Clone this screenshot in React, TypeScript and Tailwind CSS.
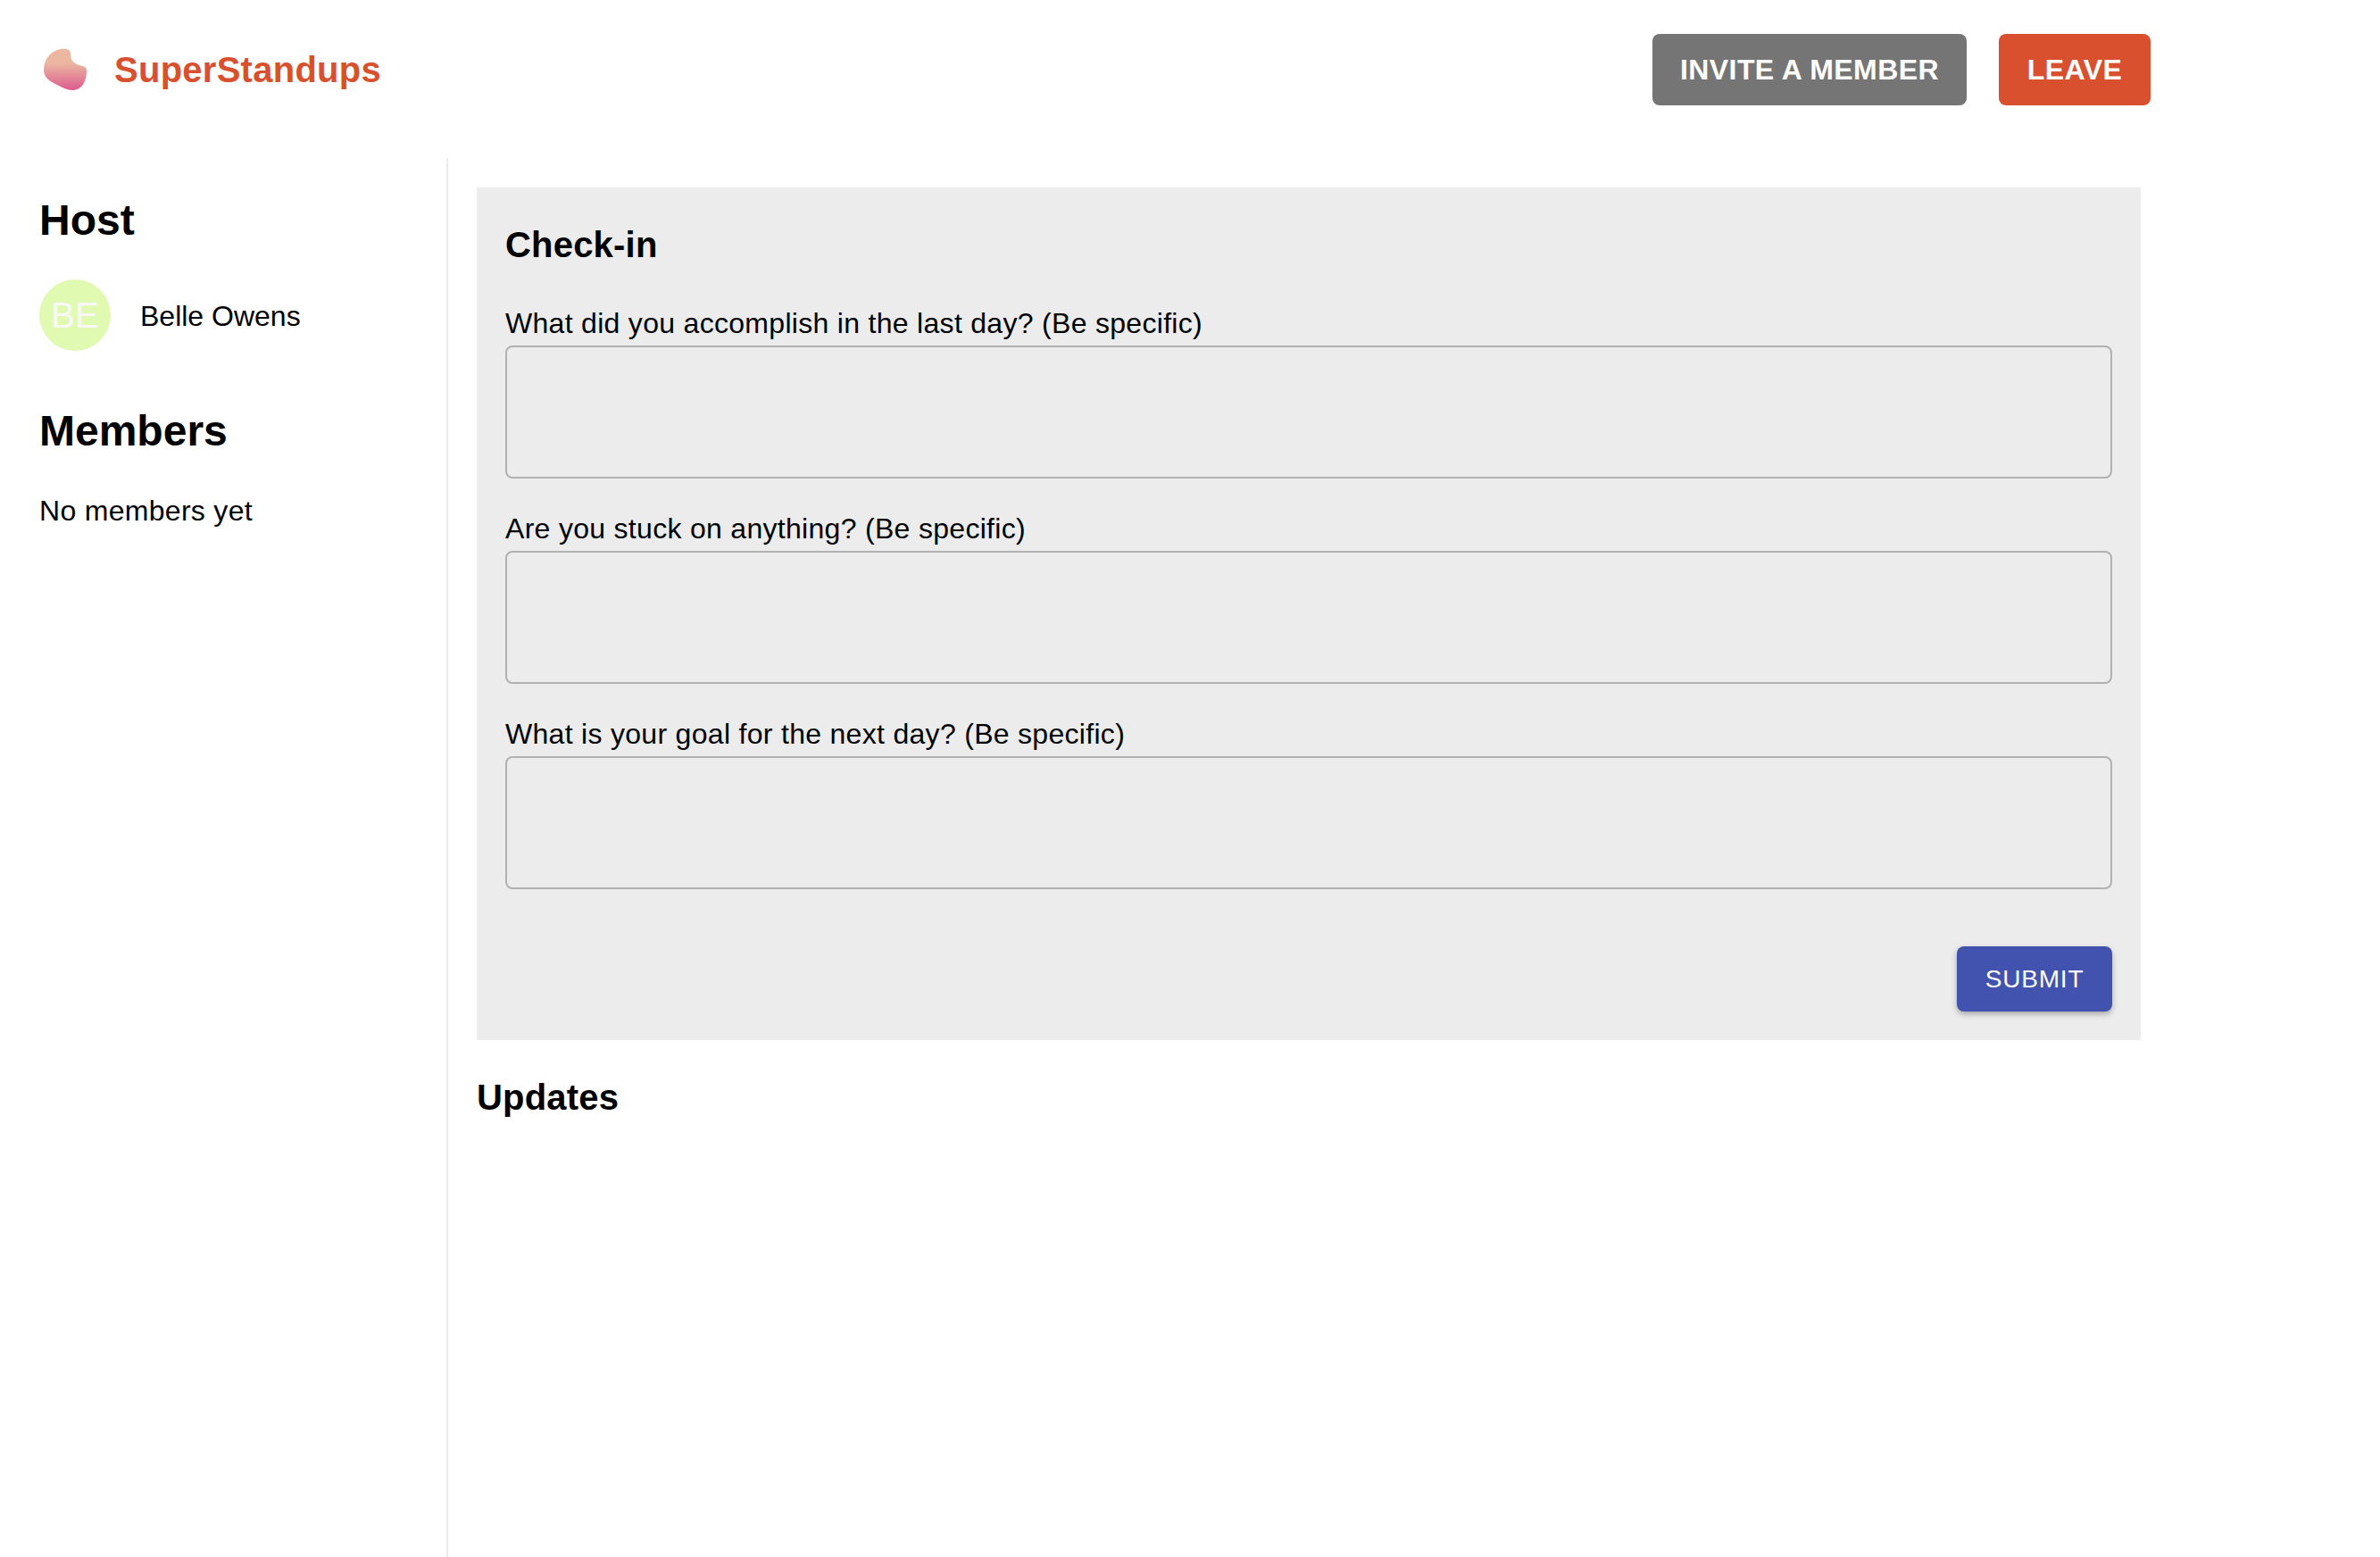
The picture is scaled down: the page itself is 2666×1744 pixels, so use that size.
import React from 'react';

const questions = [
  'What did you accomplish in the last day? (Be specific)',
  'Are you stuck on anything? (Be specific)',
  'What is your goal for the next day? (Be specific)',
];

function Logo() {
  return (
    <svg width="50" height="48" viewBox="0 0 50 48" className="shrink-0">
      <defs>
        <linearGradient id="blob" x1="0" y1="0" x2="0" y2="1">
          <stop offset="0.35" stopColor="#ebb7a1" />
          <stop offset="1" stopColor="#dc5a8e" />
        </linearGradient>
      </defs>
      <path
        d="M20 1C26 0 31 1 31 6C31 13 34 17 41 19C46 20.500 49 21 49 25C49 37 44 47 33 47C27 47 22 44 14 40C6 36 1 32 1 24C1 12 9 3 20 1Z"
        fill="url(#blob)"
      />
    </svg>
  );
}

function Question({ label }: { label: string }) {
  return (
    <div className="flex flex-col">
      <label className="text-[32px] leading-[50px] tracking-[0.3px] text-black">{label}</label>
      <textarea className="block h-[149px] w-full resize-none rounded-lg border-2 border-[#b1b1b1] bg-transparent outline-none" />
    </div>
  );
}

export default function App() {
  return (
    <div className="flex min-h-screen flex-col bg-white font-['Liberation_Sans',Arial,sans-serif] text-black">
      <header className="flex h-[177px] shrink-0 items-start pt-[38px] pr-[257px] pl-[48px]">
        <div className="flex h-[80px] items-center gap-[30px]">
          <Logo />
          <span className="text-[40px] font-bold tracking-[0.26px] text-[#d9502e]">SuperStandups</span>
        </div>
        <div className="ml-auto flex gap-[36px]">
          <button className="h-[80px] w-[352px] rounded-lg bg-[#757575] text-[32px] font-bold tracking-[0.4px] text-white">
            INVITE A MEMBER
          </button>
          <button className="h-[80px] w-[170px] rounded-lg bg-[#d9502e] text-[32px] font-bold tracking-[0.4px] text-white">
            LEAVE
          </button>
        </div>
      </header>

      <div className="flex flex-1">
        <aside className="w-[502px] shrink-0 border-r-2 border-[#ececec] pt-[42px] pl-[44px]">
          <h2 className="text-[48px] leading-[56px] font-bold">Host</h2>
          <div className="mt-[38px] flex items-center gap-[33px]">
            <div className="flex h-[80px] w-[80px] items-center justify-center rounded-full bg-[#e0fbb1] text-[40px] text-[#f8f8f8]">
              BE
            </div>
            <span className="pt-[1px] text-[32px]">Belle Owens</span>
          </div>
          <h2 className="mt-[62px] text-[48px] leading-[56px] font-bold">Members</h2>
          <p className="mt-[43px] text-[32px] leading-[37px] tracking-[0.3px]">No members yet</p>
        </aside>

        <main className="flex-1 pt-[33px] pl-[32px]">
          <section className="flex h-[955px] w-[1864px] flex-col bg-[#ececec] px-[32px] pt-[41px]">
            <h3 className="text-[40px] leading-[46px] font-bold tracking-[0.2px]">Check-in</h3>
            <div className="mt-[40px] flex flex-col gap-[31px]">
              {questions.map(q => (
                <Question key={q} label={q} />
              ))}
            </div>
            <div className="mt-[64px] flex justify-end">
              <button className="h-[73px] w-[174px] rounded-lg bg-[#4153af] text-[28px] tracking-[0.8px] text-white shadow-[0_3px_6px_rgba(0,0,0,0.3)]">
                SUBMIT
              </button>
            </div>
          </section>
          <h3 className="mt-[41px] text-[40px] leading-[46px] font-bold tracking-[0.2px]">Updates</h3>
        </main>
      </div>
    </div>
  );
}
